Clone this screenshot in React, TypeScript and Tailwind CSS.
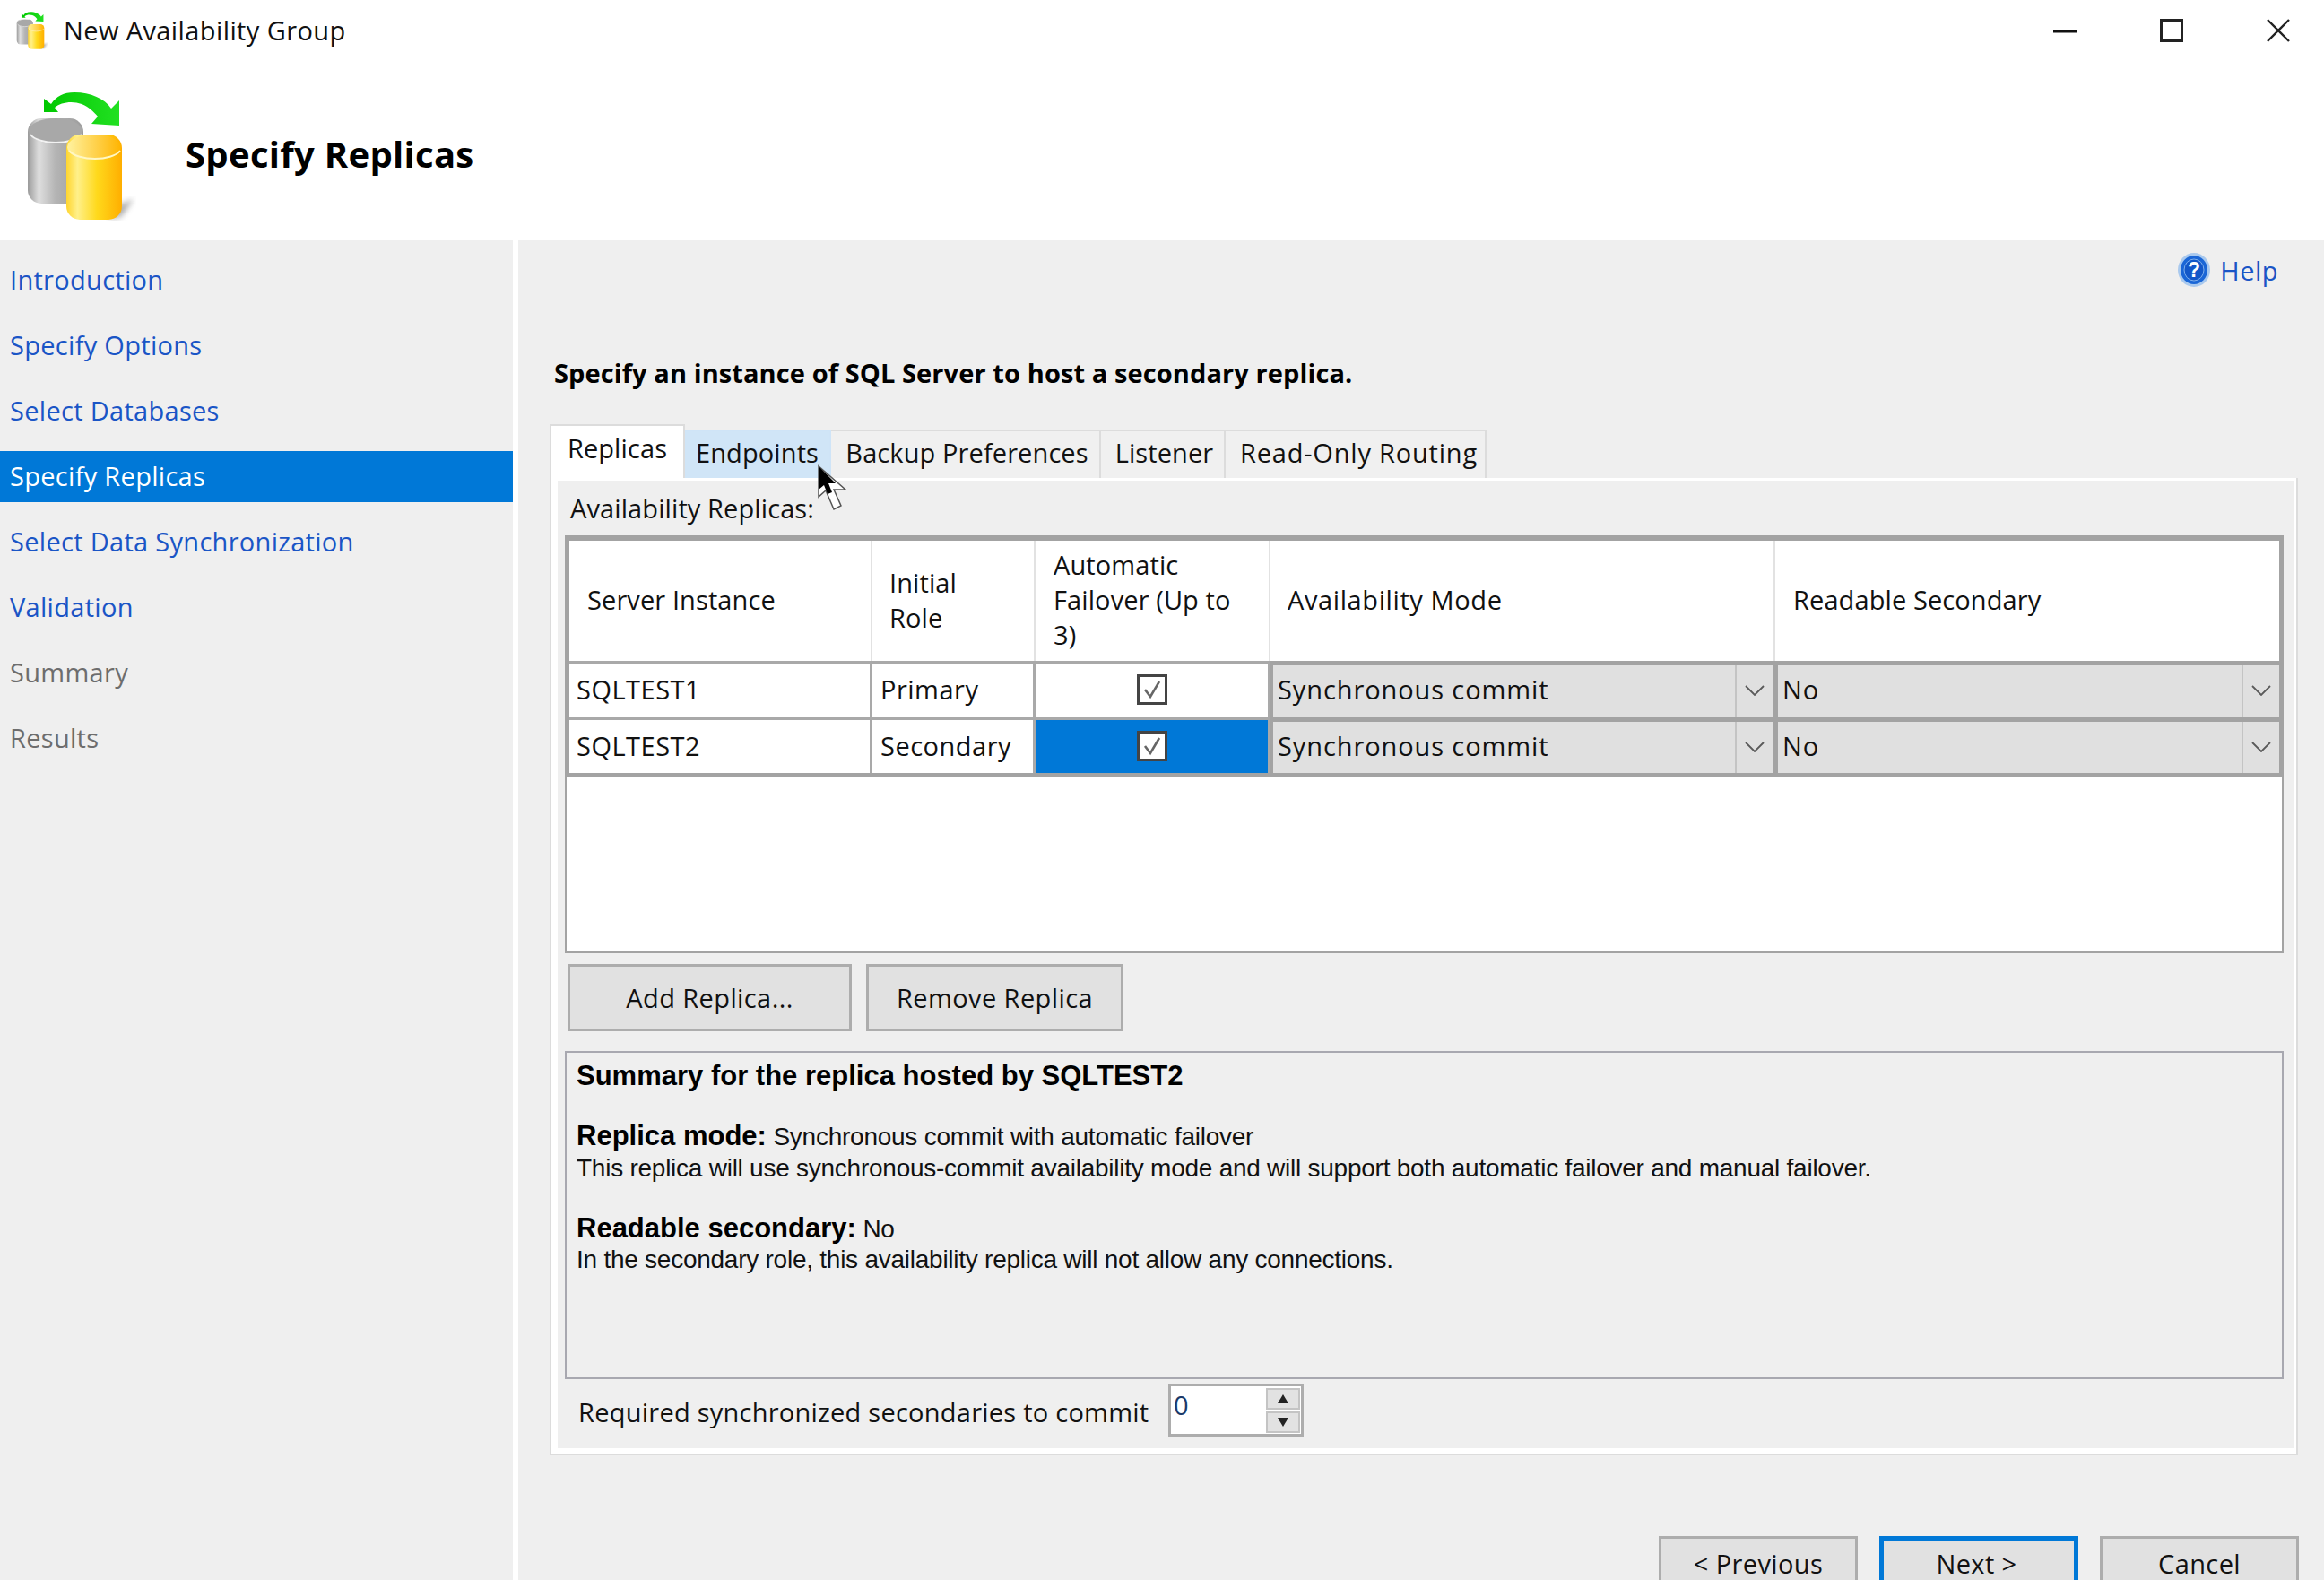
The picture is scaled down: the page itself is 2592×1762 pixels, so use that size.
import type { ReactNode } from "react"

const STEPS = [
  { label: "Introduction", state: "link" },
  { label: "Specify Options", state: "link" },
  { label: "Select Databases", state: "link" },
  { label: "Specify Replicas", state: "active" },
  { label: "Select Data Synchronization", state: "link" },
  { label: "Validation", state: "link" },
  { label: "Summary", state: "off" },
  { label: "Results", state: "off" },
]

const TABS = [
  { label: "Endpoints", w: "w-[163px]", hover: true },
  { label: "Backup Preferences", w: "w-[301px] pl-[4px]", hover: false },
  { label: "Listener", w: "w-[139px] pl-[4px]", hover: false },
  { label: "Read-Only Routing", w: "w-[291px] pl-[8px] tracking-[0.8px]", hover: false },
]

function ReplicaIcon({ className, id }: { className: string; id: string }) {
  return (
    <svg viewBox="0 0 122 144" className={className}>
      <defs>
        <linearGradient id={id + "g"} x1="0" x2="1" y1="0" y2="0">
          <stop offset="0" stopColor="#9a9a9a" />
          <stop offset="0.2" stopColor="#dedede" />
          <stop offset="0.5" stopColor="#b4b4b4" />
          <stop offset="1" stopColor="#9c9c9c" />
        </linearGradient>
        <linearGradient id={id + "y"} x1="0" x2="1" y1="0" y2="0">
          <stop offset="0" stopColor="#ffd52e" />
          <stop offset="0.2" stopColor="#fff08a" />
          <stop offset="0.55" stopColor="#ffd91c" />
          <stop offset="1" stopColor="#ffae00" />
        </linearGradient>
        <linearGradient id={id + "t"} x1="0" x2="1" y1="0" y2="0">
          <stop offset="0" stopColor="#fff2a0" />
          <stop offset="1" stopColor="#ffb400" />
        </linearGradient>
        <linearGradient id={id + "a"} x1="0" x2="1" y1="0" y2="0">
          <stop offset="0" stopColor="#00c800" />
          <stop offset="1" stopColor="#22e022" />
        </linearGradient>
        <filter id={id + "s"}>
          <feGaussianBlur stdDeviation="3" />
        </filter>
      </defs>
      <path d="M98 128 L118 120 L104 140 L90 142 Z" fill="#777" opacity="0.6" filter={"url(#" + id + "s)"} />
      <rect x="0" y="30" width="62" height="95" rx="15" fill={"url(#" + id + "g)"} />
      <ellipse cx="31" cy="44" rx="30" ry="14" fill="#a8a8a8" />
      <path d="M3 48 C12 60 50 60 60 48" fill="none" stroke="#f2f2f2" strokeWidth="2" />
      <rect x="43" y="48" width="62" height="95" rx="15" fill={"url(#" + id + "y)"} />
      <ellipse cx="74" cy="62" rx="30" ry="14" fill={"url(#" + id + "t)"} />
      <path d="M46 66 C56 78 94 78 103 66" fill="none" stroke="#fff7c4" strokeWidth="2" />
      <path d="M18 8 L18 23 L34 23 L30 18 C36 12 50 10 60 14 C68 17 74 23 78 28 L71 36 L102 38 L102 10 L93 19 C86 8 70 1 52 1 C40 1 32 5 26 14 Z" fill={"url(#" + id + "a)"} />
    </svg>
  )
}

function Chevron() {
  return (
    <svg viewBox="0 0 22 12" className="h-[12px] w-[22px]">
      <polyline points="1,1 11,11 21,1" fill="none" stroke="#5a5a5a" strokeWidth="1.8" />
    </svg>
  )
}

function CheckBox() {
  return (
    <span className="flex h-[34px] w-[34px] items-center justify-center border-[3px] border-[#444] bg-white">
      <svg viewBox="0 0 24 24" className="h-[24px] w-[24px]">
        <polyline points="4,12 10,20 20,3" fill="none" stroke="#666" strokeWidth="2.6" />
      </svg>
    </span>
  )
}

function Dropdown({ value, last }: { value: string; last?: boolean }) {
  return (
    <div className={"flex border-t-[5px] border-l-[3px] border-[#a3a3a3] bg-[#e0e0e0] " + (last ? "" : "border-r-[3px]")}>
      <span className="flex-1 pl-[5px] leading-[53px] tracking-[0.9px]">{value}</span>
      <span className="flex w-[42px] items-center justify-center border-l-2 border-[#c4c4c4] pb-[2px]">
        <Chevron />
      </span>
    </div>
  )
}

function Cell({ children, className }: { children: ReactNode; className: string }) {
  return <div className={"flex items-center border-t-[3px] border-r-[3px] border-[#a9a9a9] pb-[2px] tracking-[0.5px] " + className}>{children}</div>
}

function HeaderCell({ children, pad, line }: { children: ReactNode; pad: string; line?: boolean }) {
  return (
    <div className={"flex items-center pb-[3px] leading-[39px] " + pad + (line ? " border-r-2 border-[#e2e2e2]" : "")}>
      <span>{children}</span>
    </div>
  )
}

function PushButton({ label, w }: { label: string; w: string }) {
  return (
    <button className={"flex h-[75px] items-center justify-center border-[3px] border-[#adadad] bg-[#e1e1e1] tracking-[0.4px] " + w}>{label}</button>
  )
}

function WizardButton({ label, primary }: { label: string; primary?: boolean }) {
  return (
    <button className={"flex h-[100px] w-[222px] justify-center bg-[#e1e1e1] leading-[26px] tracking-[0.4px] " + (primary ? "border-[5px] border-[#0078d7] pr-[5px] pt-[13px]" : "border-[3px] border-[#adadad] pt-[15px]")}>
      {label}
    </button>
  )
}

export default function App() {
  return (
    <div className="relative h-[1762px] w-[2592px] overflow-hidden bg-white font-['Open_Sans',sans-serif] text-[29px] tracking-[0.1px] text-[#111]">
      {/* title bar */}
      <div className="flex h-[67px] items-center">
        <ReplicaIcon id="small" className="ml-[18px] h-[42px] w-[37px]" />
        <span className="ml-[16px] tracking-[0.4px]">New Availability Group</span>
        <div className="ml-auto mr-[38px] flex items-center gap-[93px]">
          <svg viewBox="0 0 26 26" className="h-[26px] w-[26px]"><line x1="0" y1="14" x2="26" y2="14" stroke="#111" strokeWidth="3" /></svg>
          <svg viewBox="0 0 26 26" className="h-[26px] w-[26px]"><rect x="1.5" y="1.5" width="23" height="23" fill="none" stroke="#222" strokeWidth="3" /></svg>
          <svg viewBox="0 0 26 26" className="h-[26px] w-[26px]"><path d="M1 1 L25 25 M25 1 L1 25" stroke="#222" strokeWidth="2.4" /></svg>
        </div>
      </div>

      {/* wizard header */}
      <div className="flex h-[201px] items-start">
        <ReplicaIcon id="big" className="ml-[31px] mt-[35px] h-[144px] w-[122px]" />
        <h1 className="ml-[54px] mt-[83px] text-[40px] font-bold leading-[44px] tracking-[0.3px] text-black">Specify Replicas</h1>
      </div>

      <div className="flex h-[1494px]">
        {/* steps */}
        <div className="flex w-[572px] flex-col gap-[16px] bg-[#efefef] pt-[16px] tracking-[0.3px]">
          {STEPS.map((s) => (
            <div
              key={s.label}
              className={
                "flex h-[57px] items-center pb-[2px] pl-[11px] " +
                (s.state === "active" ? "bg-[#0078d7] text-white" : s.state === "link" ? "text-[#1a55c6]" : "text-[#6d6d6d]")
              }
            >
              {s.label}
            </div>
          ))}
        </div>
        <div className="w-[6px] bg-white" />

        <div className="flex flex-1 flex-col bg-[#efefef]">
          <div className="pl-[35px] pr-[29px]">
            <div className="flex h-[55px] items-end justify-end pr-[22px]">
              <div className="flex items-center gap-[10px] text-[#1a55c6]">
                <svg viewBox="0 0 38 40" className="h-[40px] w-[38px]">
                  <ellipse cx="19" cy="20" rx="18" ry="19" fill="#a9c9ee" />
                  <ellipse cx="19" cy="20" rx="15" ry="16" fill="#1a66d6" />
                  <ellipse cx="19" cy="20" rx="11" ry="12" fill="#1257c8" stroke="#7fb0ec" strokeWidth="1" />
                  <text x="19" y="28" textAnchor="middle" fontSize="23" fontWeight="700" fill="#fff" fontFamily="Liberation Sans">?</text>
                </svg>
                <span className="tracking-[0.5px]">Help</span>
              </div>
            </div>

            <p className="ml-[5px] mt-[72px] h-[42px] font-bold leading-[42px] text-black">Specify an instance of SQL Server to host a secondary replica.</p>

            {/* tabs */}
            <div className="mt-[36px] flex h-[60px] items-end">
              <div className="flex h-[60px] w-[151px] items-start justify-center border-x-2 border-t-2 border-[#dcdcdc] bg-white pt-[5px] leading-[40px]">Replicas</div>
              {TABS.map((t) => (
                <div
                  key={t.label}
                  className={
                    "flex h-[54px] items-center justify-center border-t-2 border-r-2 pb-[4px] " +
                    t.w +
                    (t.hover ? " border-[#cfe4f7] bg-[#d0e5f7]" : " border-[#dcdcdc] bg-[#f0f0f0]")
                  }
                >
                  {t.label}
                </div>
              ))}
            </div>

            {/* tab page */}
            <div className="h-[1090px] border-2 border-t-0 border-[#dcdcdc]">
              <div className="h-full border-t-[3px] border-l-[7px] border-r-[3px] border-b-[6px] border-white bg-[#efefef]">
                <div className="flex h-[61px] items-center pl-[14px]">Availability Replicas:</div>

                <div className="ml-[8px] mr-[11px] h-[466px] border-2 border-[#a3a3a3] bg-white">
                  <div className="grid grid-cols-[338px_182px_262px_563px_1fr] grid-rows-[134px_63px_62px] border-x-[3px] border-y-[4px] border-[#a3a3a3]">
                    <HeaderCell pad="pl-[20px]" line>Server Instance</HeaderCell>
                    <HeaderCell pad="pl-[19px]" line>Initial<br />Role</HeaderCell>
                    <HeaderCell pad="pl-[20px]" line>Automatic<br />Failover (Up to<br />3)</HeaderCell>
                    <HeaderCell pad="pl-[19px] tracking-[0.6px]" line>Availability Mode</HeaderCell>
                    <HeaderCell pad="pl-[20px]">Readable Secondary</HeaderCell>

                    <Cell className="pl-[8px]">SQLTEST1</Cell>
                    <Cell className="pl-[9px]">Primary</Cell>
                    <Cell className="justify-center"><CheckBox /></Cell>
                    <Dropdown value="Synchronous commit" />
                    <Dropdown value="No" last />

                    <Cell className="pl-[8px]">SQLTEST2</Cell>
                    <Cell className="pl-[9px]">Secondary</Cell>
                    <Cell className="justify-center bg-[#0078d7]"><CheckBox /></Cell>
                    <Dropdown value="Synchronous commit" />
                    <Dropdown value="No" last />
                  </div>
                </div>

                <div className="ml-[11px] mt-[12px] flex gap-[16px]">
                  <PushButton label="Add Replica..." w="w-[317px]" />
                  <PushButton label="Remove Replica" w="w-[287px]" />
                </div>

                {/* summary */}
                <div className="ml-[8px] mr-[11px] mt-[22px] h-[366px] border-2 border-[#a8a8b0] pl-[11px] pt-[8px] font-['Liberation_Sans',sans-serif] text-[28px] leading-[35px] tracking-[-0.25px]">
                  <p className="text-[31px] font-bold tracking-[0px] text-black">Summary for the replica hosted by SQLTEST2</p>
                  <p className="mt-[32px]"><b className="text-[31px] tracking-[0px] text-black">Replica mode:</b> Synchronous commit with automatic failover</p>
                  <p>This replica will use synchronous-commit availability mode and will support both automatic failover and manual failover.</p>
                  <p className="mt-[32px]"><b className="text-[31px] tracking-[0px] text-black">Readable secondary:</b> No</p>
                  <p className="-mt-[1px]">In the secondary role, this availability replica will not allow any connections.</p>
                </div>

                <div className="mt-[5px] flex items-start">
                  <span className="ml-[23px] mt-[12px] w-[658px] leading-[40px] tracking-[0.25px]">Required synchronized secondaries to commit</span>
                  <div className="flex h-[59px] w-[151px] justify-between border-[3px] border-[#adadad] bg-white pr-[1px]">
                    <span className="pl-[3px] leading-[42px] text-[#1a3a6a]">0</span>
                    <div className="flex w-[38px] flex-col justify-center gap-[2px]">
                      <span className="flex h-[24px] items-center justify-center border-2 border-[#c4c4c4] bg-[#e2e2e2]">
                        <svg viewBox="0 0 12 10" className="h-[10px] w-[12px]"><polygon points="6,0 12,10 0,10" fill="#222" /></svg>
                      </span>
                      <span className="flex h-[24px] items-center justify-center border-2 border-[#c4c4c4] bg-[#e2e2e2]">
                        <svg viewBox="0 0 12 10" className="h-[10px] w-[12px]"><polygon points="0,0 12,0 6,10" fill="#222" /></svg>
                      </span>
                    </div>
                  </div>
                </div>
              </div>
            </div>
          </div>

          <div className="mt-[42px] h-[3px] bg-white" />
          <div className="mt-[48px] flex justify-end gap-[24px] pr-[28px]">
            <WizardButton label="< Previous" />
            <WizardButton label="Next >" primary />
            <WizardButton label="Cancel" />
          </div>
        </div>
      </div>

      {/* mouse pointer over the Endpoints tab */}
      <svg viewBox="0 0 36 54" className="absolute left-[912px] top-[518px] h-[54px] w-[36px]">
        <path d="M1 2 L1 36 L9 29 L18 50 L26 46 L18 28 L31 28 Z" fill="#fff" stroke="#555" strokeWidth="1.5" />
        <path d="M1 2 L1 28 L7 23 L11 33 L16 31 L12 21 L20 21 Z" fill="#000" />
      </svg>
    </div>
  )
}
